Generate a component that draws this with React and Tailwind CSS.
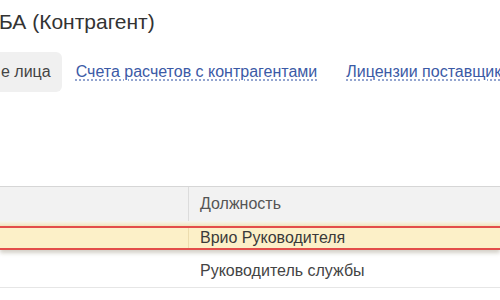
export default function App() {
  return (
    <div className="w-[500px] h-[300px] overflow-hidden bg-white text-[#333] font-[family-name:'Liberation_Sans',Arial,sans-serif]">
      {/* Title */}
      <h1 className="mt-[10px] -ml-[1px] h-[24px] text-[21px] leading-[24px] whitespace-nowrap text-[#333]">
        БА (Контрагент)
      </h1>

      {/* Tabs */}
      <div className="mt-[18px] flex items-center h-[40px] whitespace-nowrap text-[16px]">
        <div className="-ml-[10px] h-[40px] flex items-center pl-[11px] pr-[11px] rounded-[6px] bg-[#f0f0f0] text-[#444]">
          е лица
        </div>
        <a className="ml-[14px] text-[#3b5aa6] underline decoration-dotted decoration-[#7a8fc4] underline-offset-[3px]">
          Счета расчетов с контрагентами
        </a>
        <a className="ml-[29px] text-[#3b5aa6] underline decoration-dotted decoration-[#7a8fc4] underline-offset-[3px]">
          Лицензии поставщиков
        </a>
      </div>

      {/* Table */}
      <div className="mt-[94px] text-[16px] text-[#444]">
        <div className="flex h-[35px] bg-[#f2f2f2] border-t border-[#d6d6d6]">
          <div className="w-[189px] border-r border-[#dcdcdc]" />
          <div className="flex-1 flex items-center pl-[11px] text-[#555]">Должность</div>
        </div>
        <div className="h-[5px] bg-gradient-to-b from-[#f6f4ee] to-[#f3e6c0]" />
        <div className="flex h-[24px] bg-[#fcf0c8] border-y-2 border-[#e34d4a] shadow-[0_3px_4px_rgba(110,100,70,0.3)]">
          <div className="w-[189px] border-r border-[#ecdcae]" />
          <div className="flex-1 flex items-center pl-[11px] whitespace-nowrap text-[#3a3a3a]">Врио Руководителя</div>
        </div>
        <div className="flex h-[38px] pt-[4px] border-b border-[#e6e6e6]">
          <div className="w-[189px]" />
          <div className="flex-1 flex items-center pl-[11px] whitespace-nowrap">Руководитель службы</div>
        </div>
      </div>
    </div>
  );
}
